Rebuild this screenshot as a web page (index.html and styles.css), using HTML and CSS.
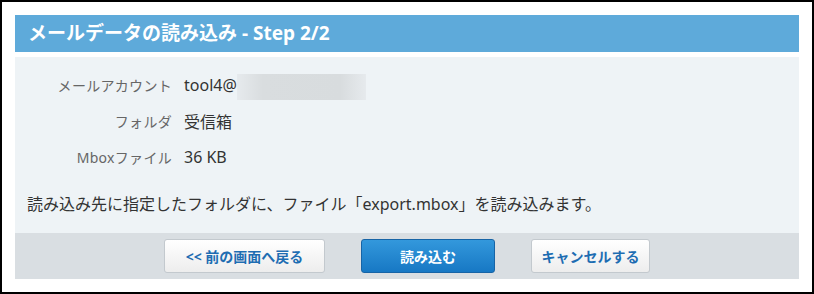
FILE: index.html
```html
<!DOCTYPE html>
<html lang="ja">

<head>
    <meta charset="UTF-8">
    <meta name="viewport" content="width=device-width, initial-scale=1.0">
    <link rel="stylesheet" href="styles.css">
    <title>メールデータの読み込み</title>
</head>

<body>
    <div class="frame">
        <div class="panel">
            <h1 class="panel-title">メールデータの読み込み - Step 2/2</h1>
            <div class="panel-body">
                <div class="info-row">
                    <span class="info-label">メールアカウント</span>
                    <span class="info-value">tool4@<span class="masked"></span></span>
                </div>
                <div class="info-row">
                    <span class="info-label">フォルダ</span>
                    <span class="info-value">受信箱</span>
                </div>
                <div class="info-row">
                    <span class="info-label">Mboxファイル</span>
                    <span class="info-value">36 KB</span>
                </div>
                <p class="message">読み込み先に指定したフォルダに、ファイル「export.mbox」を読み込みます。</p>
            </div>
            <div class="panel-footer">
                <button class="btn btn-back">&lt;&lt; 前の画面へ戻る</button>
                <button class="btn btn-primary">読み込む</button>
                <button class="btn btn-cancel">キャンセルする</button>
            </div>
        </div>
    </div>
</body>

</html>
```

FILE: styles.css
```css
body {
    margin: 0;
    padding: 0;
    background-color: #ffffff;
    font-family: "Noto Sans", "Noto Sans CJK JP", sans-serif;
}

.frame {
    width: 814px;
    height: 294px;
    box-sizing: border-box;
    border: 2px solid #000;
    padding: 13px 13px 0;
}

.panel {
    width: 784px;
}

.panel-title {
    margin: 0;
    height: 37px;
    line-height: 37px;
    padding-left: 13px;
    background-color: #5eaada;
    color: #fff;
    font-size: 19px;
    font-weight: bold;
}

.panel-body {
    margin-top: 5px;
    padding: 10px 0 17px 12px;
    background-color: #eef3f6;
    height: 149px;
}

.info-row {
    display: flex;
    align-items: center;
    height: 36px;
}

.info-label {
    width: 145px;
    text-align: right;
    font-size: 14px;
    letter-spacing: 0.3px;
    color: #666;
}

.info-value {
    display: flex;
    align-items: center;
    margin-left: 12px;
    font-size: 16px;
    color: #333;
}

.masked {
    display: inline-block;
    width: 129px;
    height: 26px;
    margin-top: 4px;
    background: linear-gradient(90deg, #e6eaed 0%, #d9dddf 20%, #d8dcde 80%, #e6eaed 100%);
}

.message {
    margin: 17px 0 0;
    line-height: 24px;
    font-size: 16px;
    color: #333;
}

.panel-footer {
    display: flex;
    justify-content: center;
    gap: 36px;
    padding: 6px 0;
    background-color: #d9dee2;
}

.btn {
    height: 34px;
    border-radius: 3px;
    font-family: inherit;
    font-size: 14px;
    font-weight: bold;
    cursor: pointer;
}

.btn-back,
.btn-cancel {
    border: 1px solid #c3c9ce;
    background: linear-gradient(#ffffff, #ededed);
    color: #1e6db2;
}

.btn-back {
    width: 161px;
}

.btn-cancel {
    width: 119px;
}

.btn-primary {
    width: 134px;
    border: 1px solid #1764a6;
    background: linear-gradient(#3398dc, #1778c4);
    color: #fff;
}
```
